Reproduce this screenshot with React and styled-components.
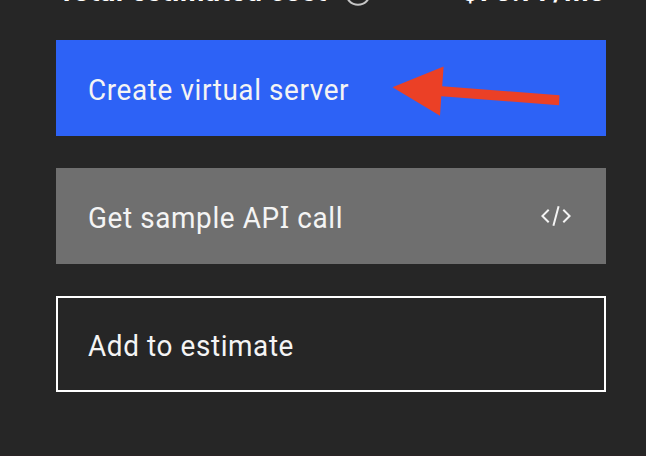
import React from "react";
import styled, { createGlobalStyle } from "styled-components";

const GlobalStyle = createGlobalStyle`
  * { box-sizing: border-box; }
  body { margin: 0; background: #262626; overflow: hidden; }
`;

const Panel = styled.main`
  position: relative;
  width: 646px;
  height: 456px;
  padding: 0 40px 0 56px;
  overflow: hidden;
  background: #262626;
  border-bottom: 1px solid #2b2426;
  color: #fff;
  font-family: Roboto, "Open Sans", sans-serif;
  display: flex;
  flex-direction: column;
`;

const Summary = styled.header`
  display: flex;
  justify-content: space-between;
  height: 40px;
  font-size: 28px;
  line-height: 34px;
  font-weight: 700;
`;

const SummaryLabel = styled.div`
  display: flex;
  align-items: flex-start;
  gap: 17px;
  margin: -25px 0 0 2px;
`;

const Price = styled.div`
  margin-top: -25px;
`;

const Fit = styled.span`
  display: block;
  width: ${(p) => p.$width}px;
  white-space: nowrap;
  letter-spacing: ${(p) => p.$spacing || 0}px;
  transform: scaleX(${(p) => p.$scale});
  transform-origin: left center;
`;

const SlabLetter = styled.span`
  font-family: "Noto Sans", sans-serif;
  line-height: 1;
`;

const Actions = styled.div`
  display: grid;
  gap: 32px;
`;

const variants = {
  primary: "background: #2d62f6; border-color: #2d62f6;",
  secondary: "background: #6f6f6f; border-color: #6f6f6f;",
  outline: "background: transparent; border-color: #fff;",
};

const Button = styled.button`
  display: flex;
  align-items: center;
  justify-content: space-between;
  height: 96px;
  padding: 0 32px 0 30px;
  border: 2px solid;
  border-radius: 0;
  color: #f4f4f4;
  font: 400 30px/40px Roboto, "Open Sans", sans-serif;
  text-align: left;
  ${(p) => variants[p.$variant]}

  ${Fit} {
    padding-top: 4px;
  }
`;

const Pointer = styled.svg`
  position: absolute;
  left: 380px;
  top: 55px;
`;

export default function App() {
  return (
    <>
      <GlobalStyle />
      <Panel>
        <Summary>
          <SummaryLabel>
            <Fit $width={268} $spacing={0.6} $scale={1}>Total estimated cost</Fit>
            <svg width="30" height="34" viewBox="0 0 30 34" fill="none" stroke="#c6c6c6" strokeWidth="2">
              <circle cx="15" cy="17.7" r="12" />
            </svg>
          </SummaryLabel>
          <Price>
            <Fit $width={144} $spacing={0.5} $scale={1}>$73.77/mo</Fit>
          </Price>
        </Summary>
        <Actions>
          <Button $variant="primary"><Fit $width={262} $spacing={0.65} $scale={0.93}>Create virtual server</Fit></Button>
          <Button $variant="secondary">
            <Fit $width={254} $spacing={0.65} $scale={0.93}>Get sample AP<SlabLetter>I</SlabLetter> call</Fit>
            <svg width="32" height="32" viewBox="0 0 32 32" fill="#f4f4f4">
              <path d="M31 16l-7 7-1.41-1.41L28.17 16l-5.58-5.59L24 9zM1 16l7-7 1.41 1.41L3.83 16l5.58 5.59L8 23zM12.42 25.484L17.64 6l1.932.518L14.352 26z" />
            </svg>
          </Button>
          <Button $variant="outline"><Fit $width={204} $spacing={0.65} $scale={0.93}>Add to estimate</Fit></Button>
        </Actions>
        <Pointer width="190" height="70" viewBox="0 0 190 70">
          <path fill="#eb4026" d="M12.5 32.2L63.6 11.5L62.2 31.2L179.5 40.2L179 50.2L61.3 41.2L60 60.7Z" />
        </Pointer>
      </Panel>
    </>
  );
}
